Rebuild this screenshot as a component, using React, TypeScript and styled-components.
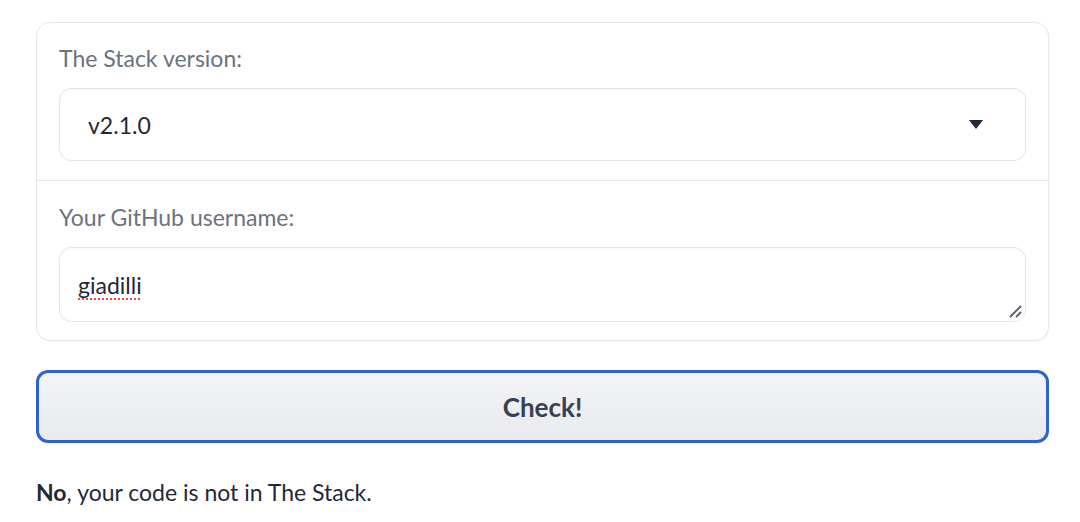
import React from "react";
import styled, { createGlobalStyle } from "styled-components";

const Global = createGlobalStyle`
  html, body { margin: 0; padding: 0; background: #ffffff; }
  body { font-family: "Lato", "Noto Sans", sans-serif; }
`;

const Page = styled.div`
  width: 1013px;
  padding: 22px 0 0 36px;
  display: flex;
  flex-direction: column;
`;

const Card = styled.div`
  border: 1.5px solid #e5e7eb;
  border-radius: 14px;
  background: #fff;
  display: flex;
  flex-direction: column;
  box-shadow: 0 1px 2px rgba(0, 0, 0, 0.03);
`;

const Field = styled.div<{ $divider?: boolean }>`
  padding: ${(p) => (p.$divider ? "21px 22px 18px 22px" : "20px 22px 19px 22px")};
  display: flex;
  flex-direction: column;
  gap: 15px;
  border-top: ${(p) => (p.$divider ? "1.5px solid #e5e7eb" : "none")};
`;

const Label = styled.div`
  font-size: 23px;
  color: #6b7280;
  line-height: 30px;
`;

const InputBox = styled.div<{ $h: number }>`
  position: relative;
  height: ${(p) => p.$h}px;
  box-sizing: border-box;
  border: 1.5px solid #e3e5e9;
  border-radius: 12px;
  box-shadow: inset 0 1px 3px rgba(0, 0, 0, 0.04);
  background: #fff;
  display: flex;
  align-items: center;
  justify-content: space-between;
  padding: 0 42px 0 28px;
  font-size: 23px;
  color: #1f2937;
`;

const TextBox = styled(InputBox)`
  padding-left: 18px;
`;

const Squiggle = styled.span`
  text-decoration: underline dotted #ef4444;
  text-decoration-thickness: 2px;
  text-underline-offset: 5px;
`;

const Handle = styled.svg`
  position: absolute;
  right: 3px;
  bottom: 3px;
`;

const Button = styled.button`
  margin-top: 29px;
  height: 73px;
  border: 3px solid #2f62cc;
  border-radius: 12px;
  background: linear-gradient(to bottom, #f3f4f6, #e8eaee);
  font-family: inherit;
  font-size: 26px;
  font-weight: 700;
  color: #374151;
  cursor: pointer;
`;

const Result = styled.p`
  margin: 35px 0 0 0;
  font-size: 23px;
  line-height: 28px;
  color: #1f2937;
  strong { font-weight: 700; }
`;

export default function App() {
  return (
    <>
      <Global />
      <Page>
        <Card>
          <Field>
            <Label>The Stack version:</Label>
            <InputBox $h={73}>
              <span>v2.1.0</span>
              <svg width="14" height="9" viewBox="0 0 14 9">
                <polygon points="0,0 14,0 7,9" fill="#1f2937" />
              </svg>
            </InputBox>
          </Field>
          <Field $divider>
            <Label>Your GitHub username:</Label>
            <TextBox $h={75}>
              <Squiggle>giadilli</Squiggle>
              <Handle width="14" height="14" viewBox="0 0 14 14">
                <line x1="2" y1="13" x2="13" y2="2" stroke="#555b66" strokeWidth="1.8" />
                <line x1="8" y1="13" x2="13" y2="8" stroke="#555b66" strokeWidth="1.8" />
              </Handle>
            </TextBox>
          </Field>
        </Card>
        <Button>Check!</Button>
        <Result>
          <strong>No</strong>, your code is not in The Stack.
        </Result>
      </Page>
    </>
  );
}
